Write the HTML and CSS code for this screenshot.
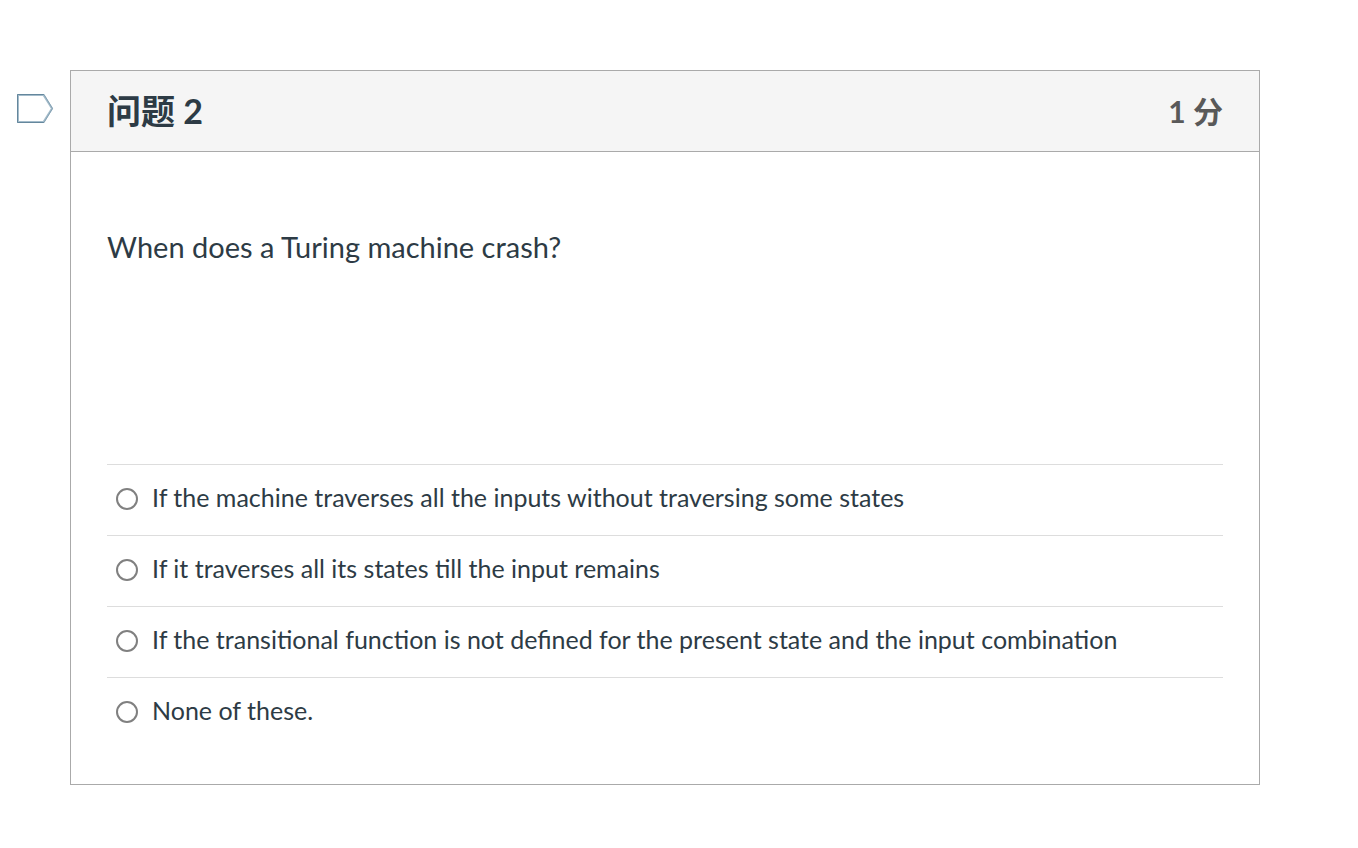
FILE: index.html
```html
<!DOCTYPE html>
<html lang="zh-Hans">
<head>
    <meta charset="UTF-8">
    <title>问题 2</title>
    <link rel="stylesheet" href="styles.css">
</head>
<body>

<main class="quiz">
    <button class="flag" type="button" aria-label="Flag question">
        <svg width="38" height="32" viewBox="0 0 38 32" fill="none">
            <path d="M2 2H27.5L36 15.5L27.5 29H2Z" stroke="#a4bccb" stroke-width="2"/>
            <path d="M28 1.5H1.5V29.5H28" stroke="#64879d"/>
            <path d="M28 1.5L36.5 15.5L28 29.5" stroke="#84a1b3"/>
        </svg>
    </button>

    <form class="question">
        <header class="question-header">
            <h2>问题 2</h2>
            <span class="points">1 分</span>
        </header>

        <fieldset class="question-body">
            <legend class="question-text">When does a Turing machine crash?</legend>
            <label class="answer">
                <input type="radio" name="answer">
                <span>If the machine traverses all the inputs without traversing some states</span>
            </label>
            <label class="answer">
                <input type="radio" name="answer">
                <span>If it traverses all its states till the input remains</span>
            </label>
            <label class="answer">
                <input type="radio" name="answer">
                <span>If the transitional function is not defined for the present state and the input combination</span>
            </label>
            <label class="answer">
                <input type="radio" name="answer">
                <span>None of these.</span>
            </label>
        </fieldset>
    </form>
</main>

</body>
</html>
```

FILE: styles.css
```css
* {
    box-sizing: border-box;
}

body {
    margin: 0;
    background: #fff;
    color: #2d3b45;
    font-family: Lato, "Noto Sans CJK SC", sans-serif;
}

.quiz {
    display: flex;
    align-items: flex-start;
    gap: 16px;
    padding: 70px 98px 63px 16px;
}

.flag {
    flex: none;
    margin-top: 23px;
    padding: 0;
    border: 0;
    background: none;
    cursor: pointer;
}

.flag svg {
    display: block;
}

.question {
    flex: 1;
    border: 1px solid #aaa;
}

.question-header {
    display: flex;
    align-items: center;
    justify-content: space-between;
    height: 81px;
    padding: 0 36px 3px;
    border-bottom: 1px solid #aaa;
    background: #f5f5f5;
}

.question-header h2 {
    margin: 0;
    font-size: 34px;
    font-weight: bold;
}

.points {
    color: #595959;
    font-size: 30px;
    font-weight: bold;
}

.question-body {
    min-width: 0;
    margin: 0;
    padding: 75px 36px 36px;
    border: 0;
}

.question-text {
    float: left;
    width: 100%;
    margin-bottom: 197px;
    padding: 0;
    font-size: 29px;
    line-height: 40px;
}

.answer {
    display: flex;
    clear: both;
    align-items: center;
    gap: 14px;
    padding: 13px 9px 19px;
    border-top: 1px solid #ddd;
    font-size: 25px;
    line-height: 38px;
    cursor: pointer;
}

.answer input {
    flex: none;
    width: 22px;
    height: 22px;
    margin: 4px 0 0;
    appearance: none;
    border: 2px solid #808080;
    border-radius: 50%;
    background: #fff;
}

.answer input:checked {
    border-width: 6px;
}
```
